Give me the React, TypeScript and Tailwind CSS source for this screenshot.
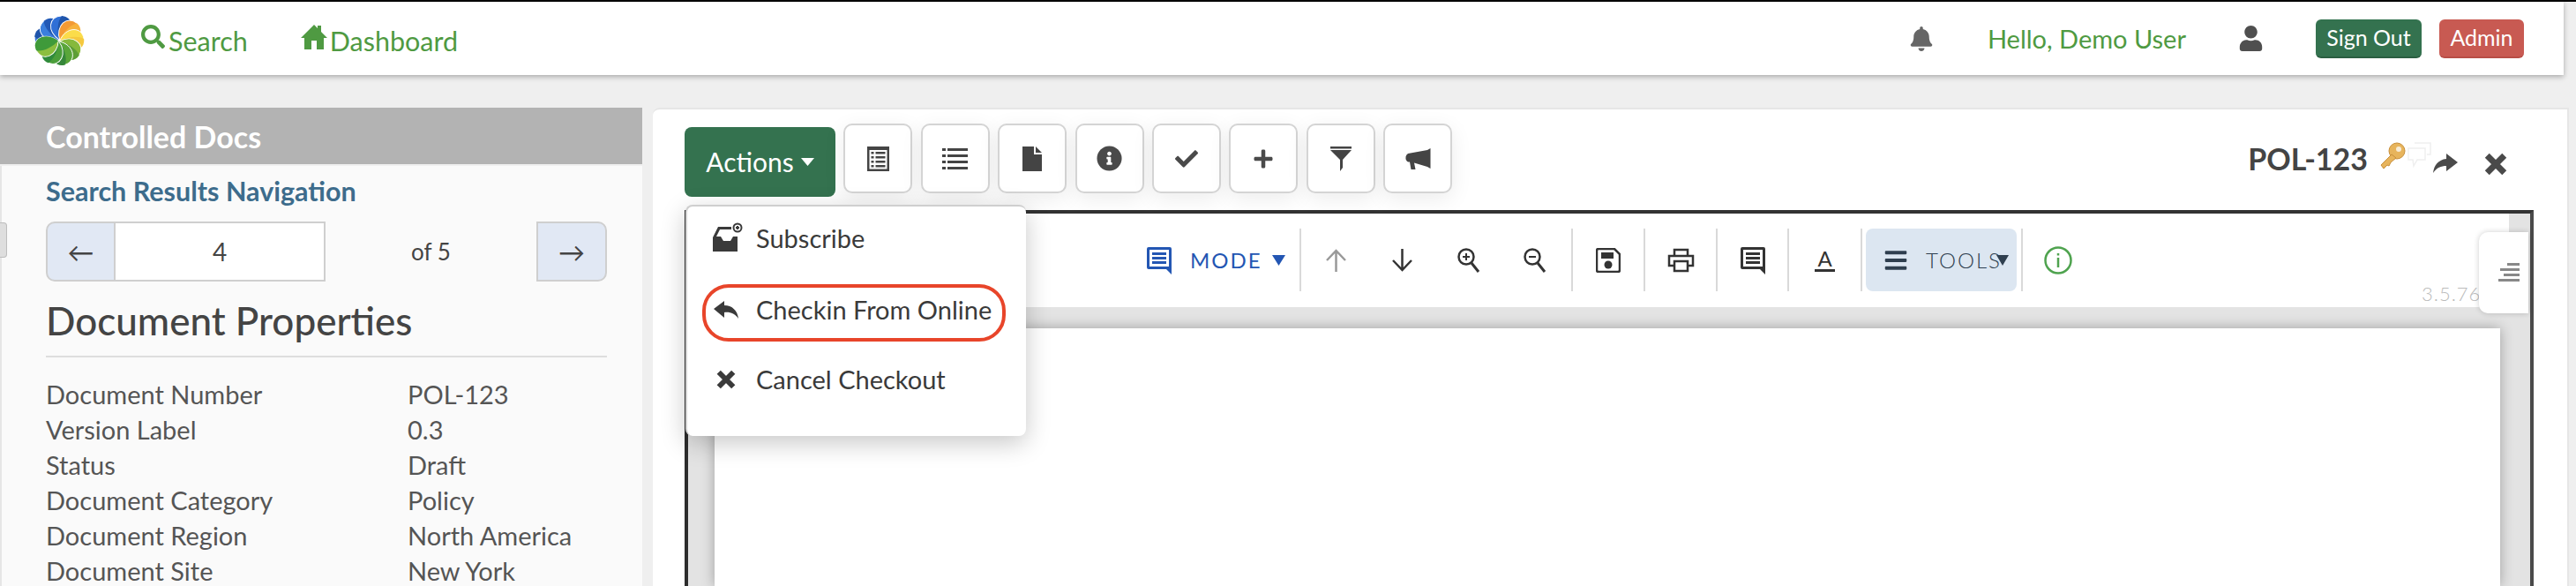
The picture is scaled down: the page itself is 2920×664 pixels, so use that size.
import { FaBell, FaSearch, FaUser, FaInfoCircle, FaCheck, FaPlus, FaBars } from "react-icons/fa";

const petals = [
  { a: -75, c: "#3577d8", d: "#1f55ab" },
  { a: -32, c: "#3b7fdc", d: "#2259b5" },
  { a: 12, c: "#2f6fd6", d: "#1f55ab" },
  { a: 52, c: "#f39a34", d: "#f7b23c" },
  { a: 92, c: "#fbdc4a", d: "#f5c93f" },
  { a: 132, c: "#86b93c", d: "#5d9e36" },
  { a: 172, c: "#5aa63a", d: "#36873a" },
  { a: 212, c: "#4b9e3a", d: "#2f8a3c" },
  { a: 252, c: "#8cbe3f", d: "#3f9a3a" },
];

function Logo() {
  return (
    <svg width="58" height="58" viewBox="-31 -31 62 62">
      {petals.map((p) => (
        <g key={p.a} transform={`rotate(${p.a})`}>
          <path d="M0 -1 C-17 -7,-19 -27,-3 -30 C13 -32,16 -12,0 -1Z" fill={p.c} stroke="#fff" strokeWidth="1" />
          <path d="M0 -1 C-5 -10,-7 -23,-3 -30 C13 -32,16 -12,0 -1Z" fill={p.d} />
        </g>
      ))}
    </svg>
  );
}

function Note({ color }: { color: string }) {
  return (
    <svg width="30" height="32" viewBox="0 0 30 32">
      <path d="M3 1H27Q29 1 29 3V32L23 26H3Q1 26 1 24V3Q1 1 3 1Z" fill={color} />
      <rect x="4" y="4" width="22" height="19" fill="#fff" />
      <rect x="7" y="7" width="16" height="3" fill={color} />
      <rect x="7" y="12" width="16" height="3" fill={color} />
      <rect x="7" y="17" width="16" height="3" fill={color} />
    </svg>
  );
}

function Magnifier({ plus }: { plus?: boolean }) {
  return (
    <svg width="26" height="28" viewBox="0 0 26 28" fill="none" stroke="#333" strokeWidth="2.5">
      <circle cx="10" cy="10" r="8.5" />
      <path d="M16 17L24 27" strokeWidth="3" />
      <path d="M6 10H14" strokeWidth="2" />
      {plus && <path d="M10 6V14" strokeWidth="2" />}
    </svg>
  );
}

function Cross({ size, color }: { size: number; color: string }) {
  return (
    <svg width={size} height={size} viewBox="0 0 24 24" stroke={color} strokeWidth="6.5" fill="none">
      <path d="M3 3L21 21M21 3L3 21" />
    </svg>
  );
}

function Sep() {
  return <div className="w-[2px] h-[71px] bg-[#d9d9d9] shrink-0" />;
}

function ToolBtn({ w, children }: { w: string; children: React.ReactNode }) {
  return <div className={`${w} h-[71px] flex items-center justify-center shrink-0`}>{children}</div>;
}

function IconBtn({ children }: { children: React.ReactNode }) {
  return (
    <div className="w-[78px] h-[79px] shrink-0 rounded-[10px] border-2 border-[#d4d4d4] bg-white flex items-center justify-center text-[#4a4a4a] shadow-[0_6px_24px_rgba(0,0,0,0.08)]">
      {children}
    </div>
  );
}

const props = [
  ["Document Number", "POL-123"],
  ["Version Label", "0.3"],
  ["Status", "Draft"],
  ["Document Category", "Policy"],
  ["Document Region", "North America"],
  ["Document Site", "New York"],
];

export default function App() {
  return (
    <div className="relative h-[664px] w-[2920px] overflow-hidden bg-[#efefef] [font-family:Lato,sans-serif] border-t-2 border-black">
      <header className="relative z-10 h-[83px] w-[2906px] bg-white shadow-[0_2px_6px_rgba(0,0,0,0.3)] flex items-center text-[#4f9a42] text-[30.5px]">
        <div className="ml-[38px] mt-[4px]"><Logo /></div>
        <div className="ml-[64px] flex items-center mt-[7px]">
          <FaSearch size={27} className="mt-[-12px]" />
          <span className="ml-[4px]">Search</span>
        </div>
        <div className="ml-[60px] flex items-center mt-[7px]">
          <svg width="30" height="28" viewBox="0 0 30 28" fill="#4f9a42" className="mt-[-10px]">
            <path d="M15 0L19 4V1H23V8L30 15H26V28H18V18H12V28H4V15H0Z" />
          </svg>
          <span className="ml-[3px]">Dashboard</span>
        </div>
        <div className="ml-auto flex items-center mr-[45px]">
          <FaBell size={28} className="text-[#666] mr-[61px]" />
          <span className="text-[29px] mt-[1px]">Hello, Demo User</span>
          <FaUser size={29} className="text-[#4f4f4f] ml-[59px] mr-[59px]" />
          <div className="w-[120px] h-[44px] rounded-[6px] bg-[#34724f] border-b-2 border-[#2a5f41] text-white text-[25px] flex items-center justify-center">Sign Out</div>
          <div className="w-[96px] h-[44px] ml-[20px] rounded-[6px] bg-[#c85a52] border-b-2 border-[#b84d46] text-white text-[25px] flex items-center justify-center">Admin</div>
        </div>
      </header>

      <div className="flex pt-[37px]">
        <aside className="w-[728px] shrink-0">
          <div className="h-[64px] bg-[#b3b3b3] pl-[52px] flex items-center text-white text-[34px] font-bold">Controlled Docs</div>
          <div className="mt-[2px] h-[480px] bg-[#fafafa] border-l-2 border-[#e6e6e6] pl-[50px] pr-[40px] text-[#555] text-[29px]">
            <h3 className="pt-[10px] h-[63px] text-[#3d6c8c] font-bold text-[30.5px] leading-[36px]">Search Results Navigation</h3>
            <div className="flex items-center h-[68px]">
              <div className="w-[79px] h-[68px] rounded-l-[10px] border-2 border-[#cfcfcf] bg-[#e1e8f4] flex items-center justify-center text-[#444] text-[30px]">←</div>
              <div className="w-[238px] h-[68px] border-2 border-l-0 border-[#cfcfcf] bg-white flex items-center justify-center text-[#444] text-[28px]">4</div>
              <div className="flex-1 text-center text-[#444] text-[26px]">of 5</div>
              <div className="w-[80px] h-[68px] rounded-r-[10px] border-2 border-[#cfcfcf] bg-[#e1e8f4] flex items-center justify-center text-[#444] text-[30px]">→</div>
            </div>
            <h2 className="mt-[19px] h-[67px] border-b-2 border-[#dedede] text-[44px] leading-[50px] font-medium text-[#444]">Document Properties</h2>
            <div className="mt-[22px] leading-[40px]">
              {props.map(([k, v]) => (
                <div key={k} className="flex">
                  <span className="w-[410px]">{k}</span>
                  <span>{v}</span>
                </div>
              ))}
            </div>
          </div>
        </aside>

        <main className="relative ml-[12px] w-[2172px] h-[542px] bg-white border-t-2 border-r-2 border-[#e6e6e6] rounded-tl-[8px]">
          <div className="flex h-[114px]">
            <div className="flex ml-[36px] mt-[16px] gap-[9.4px] items-start">
              <div className="w-[171px] h-[79px] mt-[4px] rounded-[8px] bg-[#34724f] text-white text-[30px] flex items-center justify-center gap-[8px]">
                Actions
                <svg width="15" height="9" viewBox="0 0 15 9"><path d="M0 0H15L7.5 9Z" fill="#fff" /></svg>
              </div>
              <IconBtn>
                <svg width="25" height="28" viewBox="0 0 25 28" fill="#444">
                  <path fillRule="evenodd" d="M0 0H25V28H0ZM2.5 4V25.5H22.5V4Z" />
                  <path d="M4.5 6h3v2.5h-3zM9.5 6h11v2.5h-11zM4.5 11h3v2.5h-3zM9.5 11h11v2.5h-11zM4.5 16h3v2.5h-3zM9.5 16h11v2.5h-11zM4.5 21h3v2.5h-3zM9.5 21h11v2.5h-11z" />
                </svg>
              </IconBtn>
              <IconBtn>
                <svg width="29" height="26" viewBox="0 0 29 26" fill="#444">
                  <path d="M0 1h4v3H0zM6 1h23v3H6zM0 8h4v3H0zM6 8h23v3H6zM0 15h4v3H0zM6 15h23v3H6zM0 22h4v3H0zM6 22h23v3H6z" />
                </svg>
              </IconBtn>
              <IconBtn>
                <svg width="22" height="28" viewBox="0 0 22 28" fill="#444"><path d="M0 0H13V9H22V28H0ZM15 0L22 7H15Z" /></svg>
              </IconBtn>
              <IconBtn><FaInfoCircle size={29} /></IconBtn>
              <IconBtn><FaCheck size={26} /></IconBtn>
              <IconBtn><FaPlus size={24} /></IconBtn>
              <IconBtn>
                <svg width="24" height="28" viewBox="0 0 24 28" fill="#444"><path d="M0 0H24V2.5H0ZM0 4H24L14 15V24L11 28V15Z" /></svg>
              </IconBtn>
              <IconBtn>
                <svg width="29" height="24" viewBox="0 0 29 24" fill="#444"><path d="M28.5 0V23L25 21L10 16.5L11.5 24H6.5L5 15.5H3Q0 14 0.5 9.5Q1 7 3 6L25 2Z" /></svg>
              </IconBtn>
            </div>
            <div className="ml-auto mr-[68px] flex items-start pt-[36px] text-[#444]">
              <span className="text-[34px] font-bold leading-[40px]">POL-123</span>
              <svg width="32" height="32" viewBox="0 0 32 32" className="ml-[12px]">
                <circle cx="21" cy="11" r="9" fill="#e7b45c" stroke="#c88f3a" />
                <circle cx="23" cy="9" r="3" fill="#f7ecd8" />
                <path d="M15 15L3 27L6 31L10 27L12 28L14 24L20 19Z" fill="#e7b45c" stroke="#c88f3a" />
              </svg>
              <svg width="30" height="30" viewBox="0 0 30 30" fill="none" stroke="#efefef" strokeWidth="1.5" className="ml-[-1px]">
                <path d="M10 2H28V15H24" />
                <path d="M3 8H22V21H13L9 28L8 21H3Z" />
              </svg>
              <svg width="28" height="22" viewBox="0 0 28 22" fill="#4a4a4a" className="ml-[1px] mt-[14px]">
                <path d="M28 10L15 0V6C6 7 1 13 0 22C4 16 9 14 15 14V20Z" />
              </svg>
              <div className="ml-[30px] mt-[13px]"><Cross size={26} color="#4a4a4a" /></div>
            </div>
          </div>

          <div className="ml-[36px] w-[2096px] h-[426px] border-t-4 border-t-[#333] border-l-4 border-l-[#2d2d2d] border-r-4 border-r-[#4a4a4a] bg-[#e3e3e3] flex flex-col">
            <div className="flex h-[106px] shrink-0">
              <div className="w-[2064px] bg-white pt-[17px] pl-[519px] flex items-start">
                <div className="w-[174px] h-[71px] flex items-center text-[#2356b3] shrink-0">
                  <Note color="#2356b3" />
                  <span className="ml-[20px] text-[24px] tracking-[2px]">MODE</span>
                  <svg width="15" height="12" viewBox="0 0 15 12" className="ml-[11px]"><path d="M0 0H15L7.5 12Z" fill="#2356b3" /></svg>
                </div>
                <Sep />
                <div className="ml-[2px] mr-[4px] flex">
                  <ToolBtn w="w-[75px]">
                    <svg width="25" height="26" viewBox="0 0 25 26" fill="none" stroke="#999" strokeWidth="2.5"><path d="M12.5 26V2M2 13L12.5 2L23 13" /></svg>
                  </ToolBtn>
                  <ToolBtn w="w-[75px]">
                    <svg width="25" height="26" viewBox="0 0 25 26" fill="none" stroke="#333" strokeWidth="2.5"><path d="M12.5 0V24M2 13L12.5 24L23 13" /></svg>
                  </ToolBtn>
                  <ToolBtn w="w-[75px]"><Magnifier plus /></ToolBtn>
                  <ToolBtn w="w-[75px]"><Magnifier /></ToolBtn>
                </div>
                <Sep />
                <ToolBtn w="w-[80px]">
                  <svg width="28" height="28" viewBox="0 0 28 28">
                    <path d="M3 1H21L27 7V25Q27 27 25 27H3Q1 27 1 25V3Q1 1 3 1Z" fill="#fff" stroke="#333" strokeWidth="2.5" />
                    <rect x="6" y="5" width="14" height="7" fill="#333" />
                    <circle cx="14" cy="19" r="4.5" fill="#333" />
                  </svg>
                </ToolBtn>
                <Sep />
                <ToolBtn w="w-[80px]">
                  <svg width="31" height="28" viewBox="0 0 31 28" fill="none" stroke="#333" strokeWidth="2.5">
                    <path d="M8 9V2H23V9" />
                    <path d="M7 20H2V9H29V20H24" />
                    <path d="M8 15H23V26H8Z" />
                  </svg>
                </ToolBtn>
                <Sep />
                <ToolBtn w="w-[79px]"><Note color="#333" /></ToolBtn>
                <Sep />
                <ToolBtn w="w-[81px]">
                  <div className="flex flex-col items-center text-[#333]">
                    <span className="text-[24px] leading-[22px]">A</span>
                    <div className="mt-[1px] w-[23px] h-[3px] bg-[#333]" />
                  </div>
                </ToolBtn>
                <Sep />
                <div className="ml-[4px] w-[171px] h-[71px] rounded-[8px] bg-[#dce6f1] flex items-center pl-[20px] text-[#2f3f4f] shrink-0">
                  <FaBars size={28} />
                  <span className="ml-[20px] text-[24px] tracking-[2px] font-light">TOOLS</span>
                  <svg width="14" height="12" viewBox="0 0 14 12" className="ml-[-6px]"><path d="M0 0H14L7 12Z" fill="#2f3f4f" /></svg>
                </div>
                <div className="ml-[5px]"><Sep /></div>
                <ToolBtn w="w-[80px]">
                  <svg width="32" height="32" viewBox="0 0 32 32" fill="none" stroke="#4fa34f" strokeWidth="2.5">
                    <circle cx="16" cy="16" r="14.5" />
                    <path d="M16 13V24" />
                    <path d="M16 8V10.5" />
                  </svg>
                </ToolBtn>
              </div>
            </div>
            <div className="flex flex-1 pt-[24px] pl-[30px] pr-[34px]">
              <div className="flex-1 bg-white shadow-[0_0_14px_rgba(0,0,0,0.3)]" />
            </div>
          </div>

          {/* actions dropdown */}
          <div className="absolute left-[37px] top-[108px] z-20 w-[386px] h-[262px] rounded-[8px] bg-white border-l-2 border-t-2 border-[#cfcfcf] shadow-[0_8px_28px_rgba(0,0,0,0.22)] text-[#3a3a3a] text-[29px]">
            <div className="h-[72px] pl-[29px] flex items-center">
              <svg width="34" height="33" viewBox="0 0 34 33" fill="#3a3a3a" className="shrink-0 mt-[-4px]">
                <path d="M0 17L6 5H21V8H8L4 16H9L12 21H20L23 16H28V33H0Z" />
                <circle cx="28" cy="6" r="4.5" fill="#fff" stroke="#3a3a3a" strokeWidth="2" />
                <path d="M26 5h4v2h-4zM27 4h2v4h-2z" />
              </svg>
              <span className="ml-[15px]">Subscribe</span>
            </div>
            <div className="ml-[17px] mr-[23px] h-[65px] mt-[16px] pl-[9px] pb-[8px] flex items-center rounded-[30px] border-4 border-[#e8452a]">
              <svg width="28" height="20" viewBox="0 0 28 20" fill="#3a3a3a" className="shrink-0">
                <path d="M0 9L12 0V5C21 5 27 11 28 20C24 14 18 12 12 13V19Z" />
              </svg>
              <span className="ml-[20px]">Checkin From Online</span>
            </div>
            <div className="h-[88px] pl-[33px] pb-[2px] flex items-center">
              <Cross size={22} color="#3a3a3a" />
              <span className="ml-[23px]">Cancel Checkout</span>
            </div>
          </div>

          {/* version + side tab */}
          <span className="absolute left-[2005px] top-[197px] text-[22px] leading-[24px] tracking-[1px] text-[#bbb] font-light">3.5.76</span>
          <div className="absolute left-[2070px] top-[139px] w-[56px] h-[92px] rounded-l-[10px] bg-white shadow-[0_0_6px_rgba(0,0,0,0.2)] flex items-center justify-end pr-[10px] z-10">
            <svg width="24" height="22" viewBox="0 0 24 22" fill="#888"><path d="M10 0h14v3H10zM2 6h22v3H2zM6 12h18v3H6zM0 18h24v3H0z" /></svg>
          </div>
        </main>
      </div>

      {/* collapse handle on the sidebar edge */}
      <div className="absolute left-0 top-[250px] w-[8px] h-[40px] rounded-r-[4px] bg-[#dedede] border border-[#bdbdbd] border-l-0" />
    </div>
  );
}
